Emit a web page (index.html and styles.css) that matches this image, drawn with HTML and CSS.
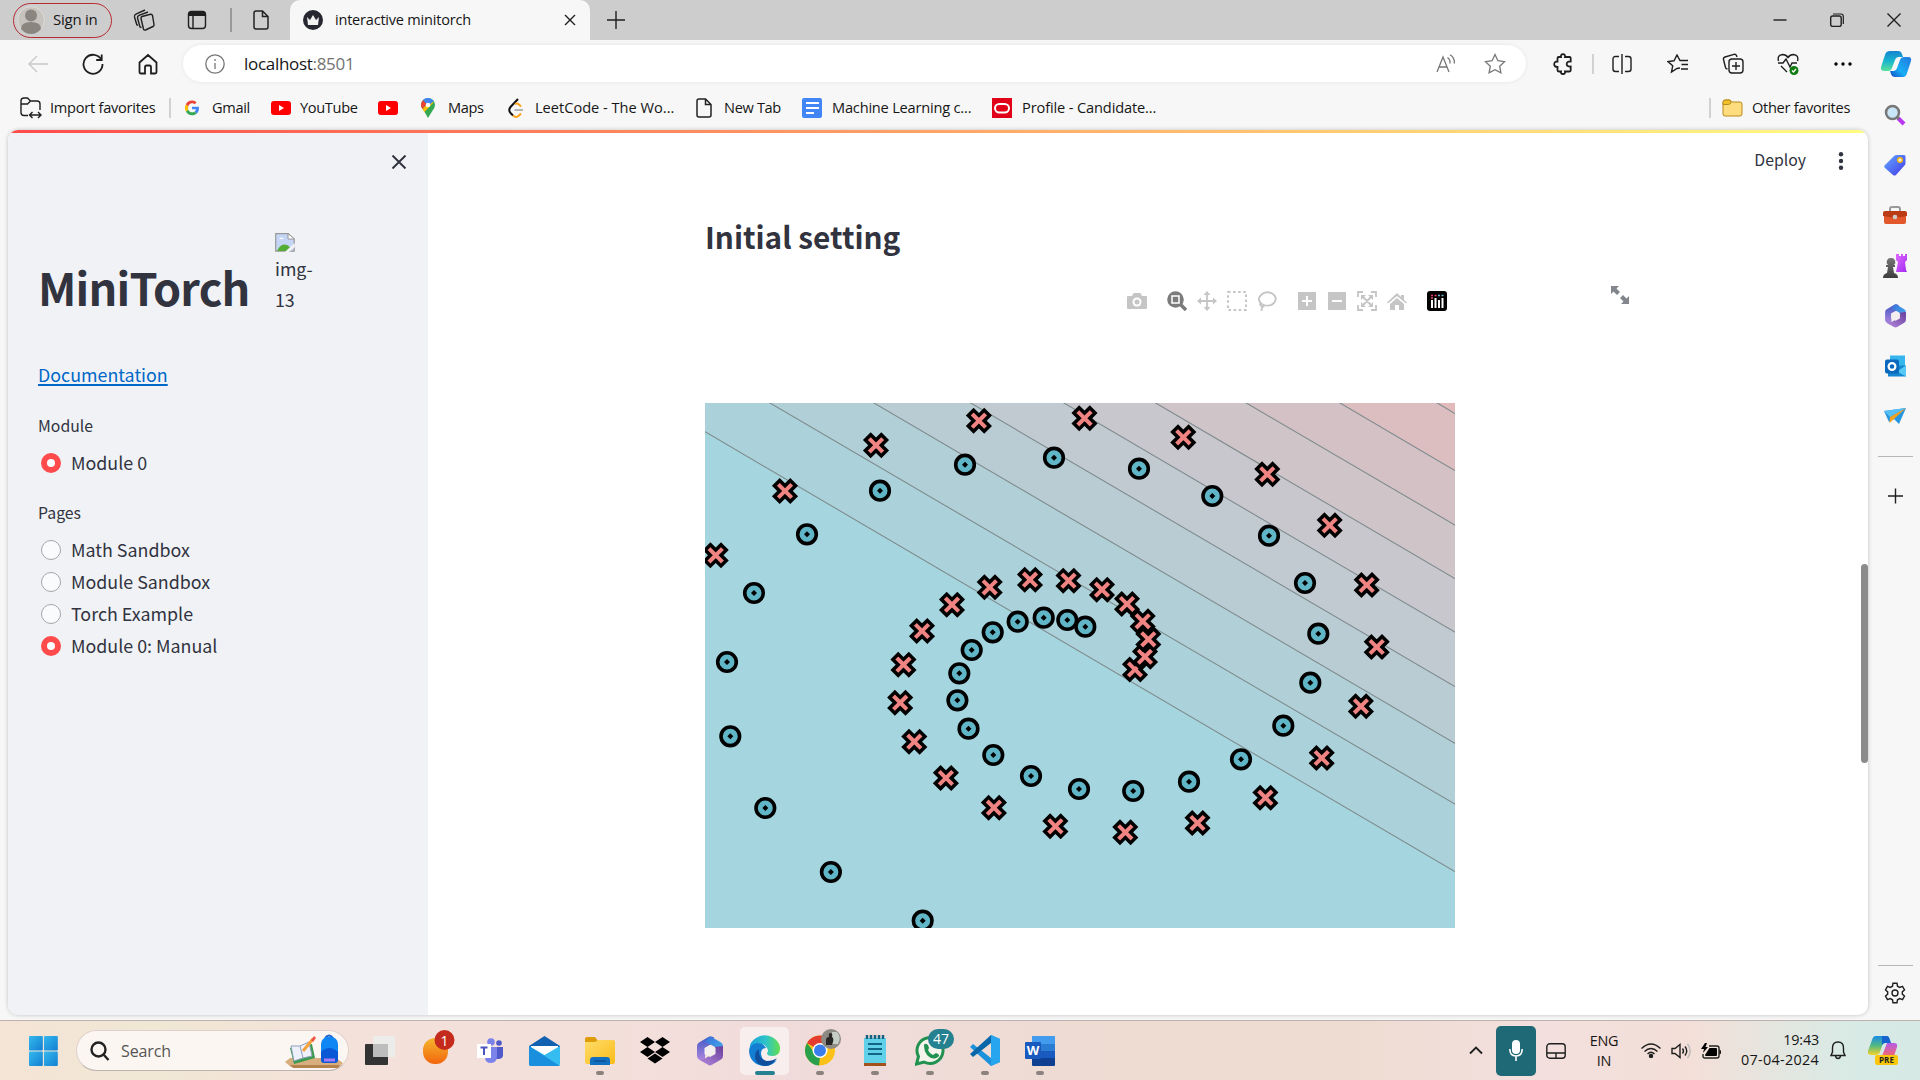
FILE: index.html
```html
<!DOCTYPE html>
<html lang="en">
<head>
<meta charset="utf-8">
<title>interactive minitorch</title>
<link rel="stylesheet" href="styles.css">
</head>
<body>
<svg width="0" height="0" class="defs">
  <defs>
    <linearGradient id="win" x1="0" y1="0" x2="1" y2="1"><stop offset="0" stop-color="#35b8ee"/><stop offset="1" stop-color="#1180d2"/></linearGradient>
    <linearGradient id="teal" x1="0" y1="0" x2="0" y2="1"><stop offset="0" stop-color="#1583cf"/><stop offset=".5" stop-color="#17b5cf"/><stop offset="1" stop-color="#5be09a"/></linearGradient>
    <linearGradient id="sky" x1="1" y1="0" x2="0" y2="1"><stop offset="0" stop-color="#2377dd"/><stop offset=".6" stop-color="#18aef5"/><stop offset="1" stop-color="#1246c4"/></linearGradient>
    <linearGradient id="tagg" x1="0" y1="0" x2="1" y2="1"><stop offset="0" stop-color="#62aaff"/><stop offset="1" stop-color="#4338e8"/></linearGradient>
    <linearGradient id="orange" x1="0" y1="0" x2="0" y2="1"><stop offset="0" stop-color="#f5b62e"/><stop offset="1" stop-color="#f2660c"/></linearGradient>
    <linearGradient id="yellow" x1="0" y1="0" x2="1" y2="1"><stop offset="0" stop-color="#ffdc6b"/><stop offset="1" stop-color="#fbbc18"/></linearGradient>
    <linearGradient id="purple" x1="0" y1="0" x2="1" y2="1"><stop offset="0" stop-color="#e06bff"/><stop offset="1" stop-color="#a22af0"/></linearGradient>
    <linearGradient id="dark" x1="0" y1="0" x2="0" y2="1"><stop offset="0" stop-color="#777"/><stop offset="1" stop-color="#3d3d3d"/></linearGradient>
    <linearGradient id="edgeTop" x1="0" y1="0" x2="1" y2="0"><stop offset="0" stop-color="#1ba0de"/><stop offset=".55" stop-color="#2fc4c6"/><stop offset="1" stop-color="#64e04e"/></linearGradient>
    <linearGradient id="rainbow" x1="0" y1="0" x2="0" y2="1"><stop offset="0" stop-color="#1a8be8"/><stop offset=".5" stop-color="#4fb884"/><stop offset="1" stop-color="#f5d32a"/></linearGradient>
    <linearGradient id="sunset" x1="0" y1="0" x2="0" y2="1"><stop offset="0" stop-color="#b45ae8"/><stop offset="1" stop-color="#f2696f"/></linearGradient>
    <linearGradient id="hexA" x1="0" y1="0" x2="1" y2="1"><stop offset="0" stop-color="#3a6fd8"/><stop offset="1" stop-color="#46b4ee"/></linearGradient>
    <linearGradient id="hexB" x1="0" y1="0" x2="0" y2="1"><stop offset="0" stop-color="#3f57c4"/><stop offset="1" stop-color="#b98be0"/></linearGradient>
    <linearGradient id="hexC" x1="0" y1="1" x2="1" y2="0"><stop offset="0" stop-color="#b58ade"/><stop offset="1" stop-color="#6a3f9c"/></linearGradient>
    <symbol id="m365" viewBox="0 0 26 30">
      <path d="M11 1.200 2 6.500Q0 7.800 0 10v10q0 2.200 2 3.400l6 3.400V12l9-5.500V1.600Q14-.5 11 1.200z" fill="url(#hexB)"/>
      <path d="M11 1.200q2-1.200 4 0l9 5.300q2 1.300 2 3.500v9l-8-4.500V11l-5-2.800L8 6z" fill="url(#hexA)"/>
      <path d="M26 10v10q0 2.200-2 3.400l-9 5.400q-2 1.200-4 0L2 23.500l6-1 10-6v-5.500z" fill="url(#hexC)"/>
      <path d="M13 9 18.500 12v6L13 21 7.500 18v-6z" fill="#f5eeee"/>
    </symbol>
    <symbol id="page" viewBox="0 0 16 20"><path d="M3 1h6.500L15 6.500V17q0 2-2 2H3q-2 0-2-2V3q0-2 2-2zM9.500 1v5.500H15" fill="none" stroke="#222" stroke-width="1.500"/></symbol>
    <symbol id="yt" viewBox="0 0 20 14"><rect width="20" height="14" rx="3" fill="#f00"/><path d="M8 4l5 3-5 3z" fill="#fff"/></symbol>
    <g id="x"><path d="M0 5.300l5.300 5.300 5.300-5.300L5.300 0l5.300-5.300-5.300-5.300L0-5.300-5.300-10.600-10.600-5.300-5.300 0-10.600 5.300-5.300 10.600z" fill="#ef8482" stroke="#000" stroke-width="3.500"/></g>
    <g id="o"><circle r="9.300" fill="#60b5c7" stroke="#000" stroke-width="3.600"/><path d="M0-3 3 0 0 3-3 0z"/></g>
  </defs>
</svg>

<header class="tabstrip">
  <div class="signin"><svg width="28" height="28" viewBox="0 0 28 28"><circle cx="14" cy="14" r="13.300" fill="#c6c2bd" stroke="#dedbd8"/><circle cx="14" cy="9.500" r="6" fill="#8a857f"/><path d="M4 23q0-7 10-7t10 7q-4 5-10 5T4 23z" fill="#8a857f"/></svg><span>Sign in</span></div>
  <div class="cell w54"><svg width="22" height="22" viewBox="0 0 22 22" class="line"><path d="M9 6.500l8.500-2.200q1.500-.3 2 1.200l1.500 9q.2 1.500-1 2l-7.500 3.500q-1.500.5-2-1L8 8.500Q7.800 7 9 6.500z" transform="translate(0 1)"/><path d="M8.500 18.500l-1.500-.5-2.500-9q-.3-2 1.500-2.700L15 3M5 16.500l-1.200-.8L1.500 8q-.4-2 1.400-2.800L12 1"/></svg></div>
  <div class="cell w52"><svg width="20" height="20" viewBox="0 0 20 20" class="line"><rect x="1.500" y="1.500" width="17" height="17" rx="3"/><path d="M2 4h16" stroke-width="4"/><path d="M6 5v13"/></svg></div>
  <i class="vline"></i>
  <div class="cell w58"><svg width="16" height="20"><use href="#page"/></svg></div>
  <div class="tab">
    <svg width="20" height="20" viewBox="0 0 20 20"><circle cx="10" cy="10" r="10" fill="#262730"/><path d="M4 7l3 3 3-5 3 5 3-3-1 8H5z" fill="#f2f2f2"/></svg>
    <span>interactive minitorch</span>
    <svg width="12" height="12" viewBox="0 0 12 12" class="line"><path d="M1 1l10 10M11 1L1 11"/></svg>
  </div>
  <div class="cell w54"><svg width="18" height="18" viewBox="0 0 18 18" class="line"><path d="M9 0v18M0 9h18"/></svg></div>
  <div class="winbtns">
    <svg width="14" height="14" viewBox="0 0 14 14" class="line"><path d="M.5 7h13"/></svg>
    <svg width="14" height="14" viewBox="0 0 14 14" class="line"><rect x=".7" y="3" width="10.500" height="10.500" rx="2"/><path d="M3 1h8q2.300 0 2.300 2.300V11" stroke-width="1.200"/></svg>
    <svg width="14" height="14" viewBox="0 0 14 14" class="line"><path d="M.5.5l13 13M13.500.5l-13 13"/></svg>
  </div>
</header>

<nav class="toolbar">
  <div class="cell w56"><svg width="22" height="20" viewBox="0 0 22 20" class="line pale"><path d="M10 2L2 10l8 8M2 10h19"/></svg></div>
  <div class="cell w54"><svg width="22" height="22" viewBox="0 0 22 22" class="line thick"><path d="M19.500 7A9.500 9.500 0 1 0 20.500 11M19.700 1.500V7h-5.500"/></svg></div>
  <div class="cell w56"><svg width="20" height="22" viewBox="0 0 20 22" class="line thick"><path d="M1.500 9.500L10 2l8.500 7.500V19q0 1.500-1.500 1.500h-4V14q0-1.500-1.500-1.500h-3Q7 12.500 7 14v6.500H3q-1.500 0-1.500-1.500z"/></svg></div>
  <div class="url">
    <svg width="20" height="20" viewBox="0 0 20 20" class="line gray"><circle cx="10" cy="10" r="9.200"/><path d="M10 9v6M10 5v2"/></svg>
    <span class="addr">localhost<b>:8501</b></span>
    <svg width="20" height="19" viewBox="0 0 20 19" class="line gray"><path d="M1 18L7 3l6 15M3 13h8M11.500 3.500q3 2 2.500 6M14 .8q5 3 4.300 8.700"/></svg>
    <svg width="22" height="22" viewBox="0 0 22 22" class="line gray star"><path d="M11 1.500l2.900 6.200 6.600.9-4.800 4.600 1.200 6.700L11 16.700l-5.900 3.200 1.200-6.700L1.500 8.600l6.600-.9z"/></svg>
  </div>
  <div class="cell ext"><svg width="20" height="22" viewBox="0 0 20 22" class="line thick"><path d="M6.500 4H8Q7.500 1.200 10 1.200T12 4h4.500q1.200 0 1.200 1.200V8.500q-4-.3-4 2.500t4 2.500v3.800q0 1.200-1.200 1.200H12q.5 2.500-2 2.500t-2-2.500H5.700q-1.200 0-1.200-1.200V14Q1.200 14 1.200 11.200T4.500 8.500V5.200Q4.500 4 5.700 4z"/></svg></div>
  <i class="vline soft"></i>
  <div class="cell w56"><svg width="20" height="20" viewBox="0 0 20 20" class="line"><path d="M7 2.500H3.500q-2.500 0-2.500 2.500v10q0 2.500 2.500 2.500H7M13 2.500h3.500Q19 2.500 19 5v10q0 2.500-2.500 2.500H13M10 0v20"/></svg></div>
  <div class="cell w56"><svg width="22" height="20" viewBox="0 0 22 20" class="line"><path d="M13 14l-3 .5-5.500 3.500 1.200-6.200L1 7.600l6-.8L10 1l3 5.500h8M14.500 10.500H21M14 15h7"/></svg></div>
  <div class="cell w54"><svg width="22" height="21" viewBox="0 0 22 21" class="line"><rect x="7" y="6" width="14" height="14" rx="3"/><path d="M14 9v8M10 13h8M15 4l-.5-1.500q-.8-1.700-2.500-1.200L3 4Q1 4.700 1.500 6.500l2 8q.5 1.500 2 1.500"/></svg></div>
  <div class="cell w56"><svg width="22" height="22" viewBox="0 0 22 22" class="line"><path d="M1.500 8Q0 2 5.500 1.500 9 1.500 11 4.500q2-3 5.500-3Q22 2 20.500 8M1 10h5l3-4 4 8 2-4h5M4 13l6 6"/><circle cx="17" cy="17.500" r="4.500" class="green"/><path d="M15 17.500l1.500 1.500 2.500-3" stroke="#fff"/></svg></div>
  <div class="cell w54"><svg width="18" height="4" viewBox="0 0 18 4"><circle cx="2" cy="2" r="1.700"/><circle cx="9" cy="2" r="1.700"/><circle cx="16" cy="2" r="1.700"/></svg></div>
  <div class="cell copilot"><svg width="31" height="28" viewBox="0 0 31 28"><path d="M9 1h8q3 0 4 3l1 3h-4q-3 0-4 3l-3 8q-1 3-4 3H3q-4 0-3-4L4 5q1-4 5-4z" fill="url(#teal)"/><path d="M22 27h-8q-3 0-4-3l-1-3h3q3 0 4-3l3-8q1-3 4-3h4q4 0 3 4l-4 12q-1 4-4 4z" fill="url(#sky)"/></svg></div>
</nav>

<nav class="bookmarks">
  <a class="bm import"><svg width="22" height="22" viewBox="0 0 22 22" class="line"><path d="M8 18.500H4q-3 0-3-3V4q0-3 3-3h3.500l3 3H17q3 0 3 3v6M1 7h6.500l3-3M10 18h10M12.500 15l-3 3 3 3M18 15l3 3-3 3"/></svg><span>Import favorites</span></a>
  <i class="vline soft"></i>
  <a class="bm gmail"><svg width="16" height="16" viewBox="0 0 48 48"><path d="M45 24c0-1.600-.1-2.700-.4-4H24v8h12c-.5 3-2 5-4.500 7l7 5.500C42.500 37 45 31 45 24z" fill="#4285f4"/><path d="M24 46c6 0 11-2 14.500-5.500l-7-5.500c-5 3.500-15 2.500-18.500-6l-7.500 5.500C9.500 41.500 16 46 24 46z" fill="#34a853"/><path d="M13 29c-1-3-1-7 0-10l-7.500-6c-3.500 7-3.500 15 0 21.500z" fill="#fbbc05"/><path d="M24 10c3.500 0 6 1.500 7.500 3l6.500-6C26 -3 11 2 5.500 13l7.500 6c2-6 6-9 11-9z" fill="#ea4335"/></svg><span>Gmail</span></a>
  <a class="bm youtube"><svg width="20" height="14"><use href="#yt"/></svg><span>YouTube</span></a>
  <a class="bm ytonly"><svg width="20" height="14"><use href="#yt"/></svg></a>
  <a class="bm maps"><svg width="14" height="20" viewBox="0 0 14 20"><path d="M0 7a7 7 0 0 1 14 0q0 3-3 6.500L7 20 3 13Q0 9.500 0 7z" fill="#34a853"/><path d="M0 7q0-3 2-5l4 4-4.500 5Q0 9 0 7z" fill="#ea4335"/><path d="M1.500 11L9 3l3.500 1.500L3.500 14z" fill="#fbbc04"/><path d="M2 2a7 7 0 0 1 10.600.8L7.500 8z" fill="#4285f4"/><circle cx="7" cy="7" r="2.300" fill="#fff"/></svg><span>Maps</span></a>
  <a class="bm leet"><svg width="16" height="20" viewBox="0 0 16 20" fill="none" stroke-width="2"><path d="M10 1L2.500 9Q0 12 2.500 15L5 17.500" stroke="#111"/><path d="M5 17.500q3 3 6 0l2-2M7 6q2-1 4 .5l2 2" stroke="#ffa116"/><path d="M6.500 12H15" stroke="#b3b3b3"/></svg><span>LeetCode - The Wo...</span></a>
  <a class="bm newtab"><svg width="16" height="20"><use href="#page"/></svg><span>New Tab</span></a>
  <a class="bm ml"><svg width="20" height="20" viewBox="0 0 20 20"><rect width="20" height="20" rx="2" fill="#4285f4"/><path d="M4 5h13M4 10h13M4 15h8" stroke="#fff" stroke-width="2"/></svg><span>Machine Learning c...</span></a>
  <a class="bm prof"><svg width="20" height="20" viewBox="0 0 20 20"><rect width="20" height="20" fill="#e1001a"/><rect x="3" y="6" width="14" height="8.500" rx="4.250" fill="none" stroke="#fff" stroke-width="2"/></svg><span>Profile - Candidate...</span></a>
  <i class="vline soft last"></i>
  <a class="bm other"><svg width="21" height="18" viewBox="0 0 21 18"><path d="M1 5q0-4 2-4h4.500q1.500 0 2 2H18q2 0 2 2v10q0 2-2 2H3q-2 0-2-2z" fill="#ffdd7e" stroke="#b98a18"/><path d="M1 5.500V3q0-2 2-2h4q2 0 2 2-.5 2.500-2.500 2.500z" fill="#f0bf2c" stroke="#b98a18"/></svg><span>Other favorites</span></a>
</nav>

<div class="middle">
  <div class="app">
    <div class="decoration"></div>
    <aside class="sidebar">
      <div class="closebar"><svg width="16" height="14" viewBox="0 0 16 14"><path d="M1.500.5l13 13M14.500.5l-13 13" stroke="#31333f" stroke-width="2"/></svg></div>
      <div class="brand">
        <h1>MiniTorch</h1>
        <div class="broken">
          <svg width="20" height="19" viewBox="0 0 20 19"><path d="M.7.7h12.500l6 5.500v12H.7z" fill="#c5d5f5" stroke="#999" stroke-width="1.200"/><path d="M2 18q3-7 8-6.500 3 0 5 3L11 18z" fill="#55ad35"/><path d="M4 6q2-3 5 0z" fill="#fff"/><path d="M13 .7V6h6.500z" fill="#fff" stroke="#999"/><path d="M19.500 10L10 19h4l6-5z" fill="#f0f2f6"/></svg>
          <p>img-<br>13</p>
        </div>
      </div>
      <a class="doc">Documentation</a>
      <div class="label">Module</div>
      <div class="radio on"><i></i>Module 0</div>
      <div class="label second">Pages</div>
      <div class="radio"><i></i>Math Sandbox</div>
      <div class="radio"><i></i>Module Sandbox</div>
      <div class="radio"><i></i>Torch Example</div>
      <div class="radio on"><i></i>Module 0: Manual</div>
    </aside>
    <main>
      <div class="actions"><span>Deploy</span><svg width="6" height="18" viewBox="0 0 6 18" fill="#31333f"><circle cx="3" cy="2.300" r="2.200"/><circle cx="3" cy="9" r="2.200"/><circle cx="3" cy="15.700" r="2.200"/></svg></div>
      <h2>Initial setting</h2>
      <div class="modebar">
        <svg class="g1" viewBox="0 0 20 20"><path d="M1 5h4l1.500-3h7L15 5h4q1 0 1 1v11q0 1-1 1H1q-1 0-1-1V6q0-1 1-1z"/><circle cx="10" cy="11" r="4.500" fill="#fff"/><circle cx="10" cy="11" r="2.500"/></svg>
        <svg class="hot" viewBox="0 0 20 20"><circle cx="8.500" cy="8.500" r="8.300"/><path d="M13 13l6 6" stroke="#7c7c7c" stroke-width="3.500"/><path d="M5 5h7v7H5z" fill="none" stroke="#fff" stroke-width="1.500"/></svg>
        <svg viewBox="0 0 20 20"><path d="M10 0l3.500 4h-2.600v5.100H16V6.500l4 3.500-4 3.500v-2.600h-5.100V16h2.600L10 20l-3.500-4h2.600v-5.100H4v2.600L0 10l4-3.500v2.600h5.100V4H6.500z"/></svg>
        <svg viewBox="0 0 20 20"><rect x="1" y="1" width="18" height="18" fill="none" stroke="#c5c5c5" stroke-width="2" stroke-dasharray="2.500 2.600"/></svg>
        <svg class="g2" viewBox="0 0 20 20"><path d="M6 14Q-1 9 4 4t12-1q5 4 1 9-4 4-10 2-4-2-4-1t2 3q2 0 2-2M5 16l-.5 4" fill="none" stroke="#c5c5c5" stroke-width="1.800"/></svg>
        <svg viewBox="0 0 20 20"><path d="M1 1h18v18H1z"/><path d="M10 5v10M5 10h10" stroke="#fff" stroke-width="2"/></svg>
        <svg viewBox="0 0 20 20"><path d="M1 1h18v18H1z"/><path d="M5 10h10" stroke="#fff" stroke-width="2"/></svg>
        <svg viewBox="0 0 20 20"><path d="M1 6V1h5M14 1h5v5M19 14v5h-5M6 19H1v-5M5 5l10 10M15 5L5 15" fill="none" stroke="#c5c5c5" stroke-width="1.800"/><path d="M4 4h5L4 9zM16 4v5l-5-5zM16 16h-5l5-5zM4 16v-5l5 5z"/></svg>
        <svg class="g3" viewBox="0 0 20 20"><path d="M10 2l4 4V4h3v5l3 2.500-1 1L10 5l-9 7.500-1-1zM10 7l7 6v6h-5v-5H8v5H3v-6z"/></svg>
        <svg viewBox="0 0 20 20"><rect width="20" height="20" rx="3" fill="#000"/><path d="M5 9v8M8.500 7v10M12 9v8M15.500 7v10" stroke="#fff" stroke-width="2"/><path d="M4 4.500h2M4 7h2M7.500 4.500h2" stroke="#f0396b" stroke-width="1.500"/><path d="M11 4.500h2M14.500 4.500h2" stroke="#6fb5d9" stroke-width="1.500"/></svg>
        <svg class="full" viewBox="0 0 18 18"><path d="M0 0h8L5.500 2.500 9 6 6 9 2.500 5.500 0 8zM18 18h-8l2.500-2.500L9 12l3-3 3.500 3.500L18 10z" fill="#84868e"/></svg>
      </div>
      <svg class="plot" width="750" height="525" viewBox="0 0 750 525">
        <rect width="750" height="525" fill="#a5d5df"/>
        <g stroke="#7f8c8e" stroke-width="1.100">
          <path d="M-2 27.500L752 469.900V-2H-2z" fill="#abd2db"/>
          <path d="M61.600-2L752 402.200V-2z" fill="#b1cfd6"/>
          <path d="M165.600-2L752 341.500V-2z" fill="#b9ccd3"/>
          <path d="M262.300-2L752 284.800V-2z" fill="#c1c9d1"/>
          <path d="M355.600-2L752 230.400V-2z" fill="#c8c7cd"/>
          <path d="M447.300-2L752 176.800V-2z" fill="#cfc4c8"/>
          <path d="M537.900-2L752 123.200V-2z" fill="#d4c1c5"/>
          <path d="M631.600-2L752 68.800V-2z" fill="#dcbdc0"/>
          <path d="M729-2L752 11.800V-2z" fill="#e3babc"/>
        </g>
        <g>
          <use href="#o" x="380.300" y="223.700"/><use href="#o" x="362.300" y="217"/><use href="#o" x="338.700" y="214.700"/><use href="#o" x="312.700" y="218.700"/><use href="#o" x="287.700" y="229.300"/><use href="#o" x="266.700" y="247"/><use href="#o" x="254.300" y="270.300"/><use href="#o" x="252.400" y="297.300"/><use href="#o" x="263.500" y="325.700"/><use href="#o" x="288.300" y="352"/><use href="#o" x="326" y="373"/><use href="#o" x="374" y="386"/><use href="#o" x="428.200" y="388"/><use href="#o" x="484" y="378.700"/><use href="#o" x="536" y="356.300"/><use href="#o" x="578.300" y="322.700"/><use href="#o" x="605.300" y="279.700"/><use href="#o" x="613.300" y="230.700"/><use href="#o" x="600" y="180"/><use href="#o" x="564" y="132.700"/><use href="#o" x="507.300" y="93"/><use href="#o" x="434" y="65.700"/><use href="#o" x="349" y="54.700"/><use href="#o" x="260" y="61.700"/><use href="#o" x="175" y="87.700"/><use href="#o" x="102" y="131.300"/><use href="#o" x="49" y="190"/><use href="#o" x="22" y="259"/><use href="#o" x="25.300" y="333.300"/><use href="#o" x="60.300" y="405"/><use href="#o" x="125.900" y="469"/><use href="#o" x="217.700" y="517.700"/>
        </g>
        <g>
          <use href="#x" x="430" y="266.500"/><use href="#x" x="440" y="253.700"/><use href="#x" x="443.300" y="236.300"/><use href="#x" x="437.700" y="218.300"/><use href="#x" x="422" y="201"/><use href="#x" x="397" y="186.700"/><use href="#x" x="363.500" y="177.700"/><use href="#x" x="325" y="176.700"/><use href="#x" x="284.700" y="184.300"/><use href="#x" x="247" y="201.700"/><use href="#x" x="217" y="228"/><use href="#x" x="198.500" y="261.700"/><use href="#x" x="195.200" y="299.700"/><use href="#x" x="209.300" y="338.700"/><use href="#x" x="240.900" y="375"/><use href="#x" x="288.900" y="404.700"/><use href="#x" x="350.400" y="423.300"/><use href="#x" x="420.300" y="429.300"/><use href="#x" x="492.500" y="420"/><use href="#x" x="560.400" y="394.700"/><use href="#x" x="616.700" y="355"/><use href="#x" x="655.900" y="303.300"/><use href="#x" x="671.700" y="244"/><use href="#x" x="661.700" y="182"/><use href="#x" x="624.700" y="122.300"/><use href="#x" x="562.300" y="71.300"/><use href="#x" x="478.300" y="34.300"/><use href="#x" x="379.500" y="15.300"/><use href="#x" x="273.900" y="17.700"/><use href="#x" x="171" y="42.300"/><use href="#x" x="80" y="88"/><use href="#x" x="10.700" y="152.300"/>
        </g>
      </svg>
    </main>
    <div class="thumb"></div>
  </div>
  <aside class="rail">
    <svg width="22" viewBox="0 0 22 22"><path d="M14 14l6 6" stroke="#b936f2" stroke-width="4"/><path d="M12 12l3 3" stroke="#777" stroke-width="2.500"/><circle cx="8.500" cy="8.500" r="6.500" fill="#c9e5f8" stroke="#777" stroke-width="2.500"/></svg>
    <svg width="22" viewBox="0 0 22 22"><path d="M10 2q1-1 3-1h7q1.500 0 1.500 1.500V9q0 2-1.500 3L12 21q-1.500 1-3 0L1 14q-1.500-1.500 0-3z" fill="url(#tagg)"/><circle cx="16" cy="6" r="2.300" fill="#eee" stroke="#f3b712" stroke-width="1.500"/></svg>
    <svg width="24" viewBox="0 0 24 18"><path d="M7 5V3q0-2 2-2h6q2 0 2 2v2" fill="none" stroke="#999" stroke-width="2"/><rect x="1" y="8" width="22" height="10" rx="2" fill="#e2582c"/><path d="M2 5h20q2 0 2 2v3L12 12 0 10V7q0-2 2-2z" fill="#bb3c14"/><circle cx="12" cy="11" r="2.300" fill="#ccc"/></svg>
    <svg width="24" viewBox="0 0 24 24"><path d="M13 0h3v2h2V0h2v2h2V0h2v6l-2 2 1 8 1 2H13l2-10-2-2z" fill="url(#purple)"/><path d="M8 4a4 4 0 0 1 3 7h1v2h-2l1 6q4 1 4 5H0q0-4 4-5l1-6H3v-2h2a4 4 0 0 1 3-7z" fill="url(#dark)"/></svg>
    <svg width="21"><use href="#m365"/></svg>
    <svg width="21" viewBox="0 0 21 21"><rect x="5" width="15" height="12" fill="#34b5ee"/><path d="M3 10h18v11H3z" fill="#1686d0"/><path d="M21 10l-9 6 9 5z" fill="#56c9f5"/><rect y="4" width="14" height="14" rx="2" fill="#0b68bd"/><circle cx="7" cy="11" r="3.400" fill="none" stroke="#fff" stroke-width="2.200"/></svg>
    <svg width="22" viewBox="0 0 22 16"><path d="M0 3L22 0 15 16 10 11 5 14z" fill="#2695e2"/><path d="M0 3L22 0 6 9z" fill="#57bff8"/><path d="M6 9L22 0 10 11 5.500 15z" fill="#f0a221"/></svg>
    <hr>
    <svg width="15" viewBox="0 0 15 15" class="line"><path d="M7.500 0v15M0 7.500h15"/></svg>
    <div class="grow"></div>
    <hr class="lower">
    <svg class="gear line" width="22" viewBox="0 0 22 22"><path d="M9 1.200h4l.5 3 2.200 1.200 2.800-1 2 3.500-2.200 2v2.200l2.200 2-2 3.500-2.800-1-2.200 1.200-.5 3H9l-.5-3-2.200-1.200-2.800 1-2-3.500 2.200-2V9.900l-2.200-2 2-3.500 2.800 1 2.200-1.200z"/><circle cx="11" cy="11" r="3"/></svg>
  </aside>
</div>

<footer class="taskbar">
  <svg class="start" width="29" height="30" viewBox="0 0 30 31" fill="url(#win)"><rect width="14.300" height="15" rx="1"/><rect x="15.500" width="14.300" height="15" rx="1"/><rect y="16" width="14.300" height="15" rx="1"/><rect x="15.500" y="16" width="14.300" height="15" rx="1"/></svg>
  <div class="search">
    <svg width="20" height="20" viewBox="0 0 20 20" fill="none" stroke="#222" stroke-width="2.400"><circle cx="8.500" cy="8.500" r="7"/><path d="M13.500 13.500L18.500 19"/></svg>
    <span>Search</span>
    <svg width="58" height="34" viewBox="0 0 58 34"><path d="M5 24h46l7 5-4 4H6l-6-5z" fill="#d9ae7e"/><path d="M5 31h50l-2 3H8z" fill="#b5824e"/><path d="M5 14l22-4 3 14-21 6z" fill="#3c9a4f"/><path d="M6 12l9 0 9-4 3 14-9 2-9 3z" fill="#eef1fb" stroke="#8da0b8"/><path d="M15 12l3 12" stroke="#8da0b8"/><path d="M18 17L28 5" stroke="#f5a13c" stroke-width="3"/><path d="M26 6l3-4 2 2-3 4z" fill="#ee5544"/><path d="M40 4q4-5 8 0" fill="none" stroke="#1d62cd" stroke-width="2"/><rect x="36" y="3" width="17" height="26" rx="7" fill="#0e87f4"/><path d="M36 18q8-8 17 0v8q0 3-3 3H39q-3 0-3-3z" fill="#0a58d6"/><path d="M39 26h11" stroke="#a97cf5" stroke-width="3"/></svg>
  </div>
  <div class="apps">
    <div class="item"><svg width="30" height="30" viewBox="0 0 30 30"><rect x="0" y="8" width="23" height="21" rx="1" fill="#333"/><rect x="8" y="0" width="22" height="21" rx="1" fill="#ececea"/><path d="M8 8h15v13H8z" fill="#bdbdbd"/></svg></div>
    <div class="item notify"><svg width="32" height="34" viewBox="0 0 32 34"><rect x="0" y="8" width="25" height="26" rx="12" fill="url(#orange)"/><circle cx="21.500" cy="10" r="10" fill="#c42b1c"/><text x="21.500" y="15.500" class="badge">1</text></svg></div>
    <div class="item"><svg width="26" height="25" viewBox="0 0 26 25"><circle cx="14" cy="4" r="3.800" fill="#7b83eb"/><circle cx="22" cy="5" r="2.800" fill="#5059c9"/><path d="M19 9h7v8q0 4-5 4h-2z" fill="#5059c9"/><path d="M8 9h12v9q0 7-6 7t-6-6z" fill="#7b83eb"/><rect y="6" width="14" height="14" fill="#fff"/><path d="M3.500 9.500h7M7 9v8" stroke="#4b53bc" stroke-width="2"/></svg></div>
    <div class="item"><svg width="31" height="30" viewBox="0 0 31 30"><path d="M0 10L15.500 0 31 10v4H0z" fill="#1261b0"/><path d="M2 10h27v12H2z" fill="#fff"/><path d="M0 10l15.500 9L31 10v18q0 2-2 2H2q-2 0-2-2z" fill="#35bdf2"/><path d="M0 10l31 20H2q-2 0-2-2z" fill="#1a8fdd"/></svg></div>
    <div class="item open"><svg width="30" height="28" viewBox="0 0 30 28"><path d="M0 2q0-2 2-2h8l3 4h17v6H0z" fill="#dd9c09"/><path d="M0 5h10l3-2h15q2 0 2 2v20q0 2-2 2H2q-2 0-2-2z" fill="url(#yellow)"/><path d="M5 28v-5q0-3 3-3h14q3 0 3 3v5z" fill="#1370c0"/><path d="M9 24h12" stroke="#09417e"/></svg></div>
    <div class="item"><svg width="30" height="27" viewBox="0 0 30 27"><path d="M7.500 0L15 5 7.500 10 0 5zM22.500 0L30 5l-7.500 5L15 5zM7.500 10L15 15l-7.500 5L0 15zM22.500 10L30 15l-7.500 5L15 15zM15 16.500l7.500 5L15 26.500 7.500 21.500z"/></svg></div>
    <div class="item"><svg width="26" height="30"><use href="#m365"/></svg></div>
    <div class="item open active"><svg width="31" height="31" viewBox="0 0 31 31"><path d="M1 17Q-1 8 7 3 15-2 23 2q9 5 8 13-1 6-8 6-5 0-5-3 2-2 0-5-3-5-9-4-6 1-8 8z" fill="url(#edgeTop)"/><path d="M0 16q1-7 8-8 7 0 9 5-5 0-5 6 1 8 10 8 3 0 6-2-5 6-12 6Q1 30 0 16z" fill="#147fd2"/><path d="M10 14q-1 10 8 12 6 0 10-3-5 8-12 8-10-1-10-9 0-6 4-8z" fill="#0f4f9e"/></svg></div>
    <div class="item open profile"><svg width="36" height="37" viewBox="0 0 36 37"><circle cx="15" cy="21.500" r="15" fill="#fbc116"/><path d="M15 21.500L2 14A15 15 0 0 1 28 14H15z" fill="#e33b2e"/><path d="M2 14l8 10.500 5 3L14 36.500A15 15 0 0 1 2 14z" fill="#29a14c"/><circle cx="15" cy="21.500" r="7.500" fill="#fff"/><circle cx="15" cy="21.500" r="6" fill="#3b7ded"/><circle cx="26" cy="10" r="10" fill="#8d8a84"/><path d="M27 3h5q3 3 2.500 8L33 15h-6z" fill="#c5cdc5"/><path d="M21 16v-5q0-3 3-3-1-4 1.500-4T27 8q2 1 1 5l-1 3z" fill="#292827"/></svg></div>
    <div class="item open"><svg width="22" height="31" viewBox="0 0 22 31"><path d="M0 27h22v4H0z" fill="#a3521b"/><path d="M0 3h22v25H0z" fill="#61d0e9"/><path d="M4 9h14M4 14h14M4 19h14" stroke="#106684" stroke-width="1.800"/><path d="M3 0v4M7 0v4M11 0v4M15 0v4M19 0v4" stroke="#14627e" stroke-width="2.500"/></svg></div>
    <div class="item open chat"><svg width="40" height="37" viewBox="0 0 40 37"><path d="M1.500 35l2-7.500A13 13 0 1 1 9 33z" fill="#f4f4ec" stroke="#219150" stroke-width="3"/><path d="M9 17q0-4 4-1l1 3-1 2q1 3 5 5l3-2q5 2 2 4-5 4-11-2-3-4-3-9z" fill="#219150"/><rect x="13" width="26" height="20" rx="10" fill="#25808f"/><text x="26" y="15.300" class="badge">47</text></svg></div>
    <div class="item open"><svg width="30" height="31" viewBox="0 0 30 31"><path d="M21 0l9 4v23l-9 4L0 12l3-3 18 14z" fill="#1c91dc"/><path d="M21 0v8L3 22l-3-3z" fill="#0967a9"/><path d="M21 0l9 4v23l-9 4z" fill="#28a5ef"/></svg></div>
    <div class="item open"><svg width="30" height="30" viewBox="0 0 30 30"><path d="M7 0h23v8H7z" fill="#429bec"/><path d="M7 8h23v7H7z" fill="#2b7cd3"/><path d="M7 15h23v7H7z" fill="#185abd"/><path d="M7 22h23v7q0 1-1 1H8q-1 0-1-1z" fill="#103f91"/><rect y="6" width="16" height="17" rx="1" fill="#185abd"/><text x="8" y="19" class="w">W</text></svg></div>
  </div>
  <div class="tray">
    <div class="cell"><svg width="14" height="9" viewBox="0 0 14 9" class="line thick"><path d="M1 7.500l6-6 6 6"/></svg></div>
    <div class="cell mic"><svg width="14" height="21" viewBox="0 0 14 21"><rect x="3" width="8" height="14" rx="4" fill="#fff"/><path d="M.8 9q0 7 6.200 7t6.200-7M7 16v5" fill="none" stroke="#fff" stroke-width="1.600"/></svg></div>
    <div class="cell"><svg width="20" height="16" viewBox="0 0 20 16" class="line"><rect x=".8" y=".8" width="18.400" height="14.400" rx="3"/><path d="M1 10h18M10 10v5"/></svg></div>
    <div class="cell lang">ENG<br>IN</div>
    <div class="cell"><svg width="20" height="15" viewBox="0 0 20 15" class="line"><path d="M.5 5.500Q10-3.500 19.500 5.500M3.500 8.500q6.500-6 13 0M6.500 11q3.500-3.500 7 0"/><circle cx="10" cy="13" r="1.500" fill="#222"/></svg></div>
    <div class="cell"><svg width="20" height="16" viewBox="0 0 20 16" class="line"><path d="M1 5.500h3L9 1.500v13L4 10.500H1zM11.500 5.500q2 2.500 0 5M14 3.500q3.500 4.500 0 9"/><path d="M16.500 1q5.500 7 0 14" stroke="#bbb"/></svg></div>
    <div class="cell"><svg width="20" height="16" viewBox="0 0 20 16"><path d="M8 3h8q2 0 2 2v8q0 2-2 2H4q-2 0-2-2v-2" fill="none" stroke="#222" stroke-width="1.400"/><path d="M8.500 5H15q1 0 1 1v6q0 1-1 1H5q-1 0-1-1z"/><path d="M18.500 6.500q1.500 0 1.500 2.500t-1.500 2.500zM4 0L0 6h3l-1 4 5-6H4.500L6 0z"/></svg></div>
    <div class="clock">19:43<br><span>07-04-2024</span></div>
    <div class="cell"><svg width="16" height="19" viewBox="0 0 16 19" class="line"><path d="M8 1Q2.500 1 2.500 7v4L1 14.500h14L13.500 11V7q0-6-5.500-6zM5.500 15q.5 2.500 2.500 2.500t2.500-2.500"/></svg></div>
    <div class="cell"><svg width="30" height="30" viewBox="0 0 30 30"><path d="M8 0h9q3 0 4 3l1 4h-5q-2 0-3 3l-2 6q-1 3-4 3H3q-4 0-3-4L4 4q1-4 4-4z" fill="url(#rainbow)"/><path d="M14 0h5q2 0 3 4l1 3h-6q-2 0-3 2z" fill="#1864cf"/><path d="M19 7h7q4 0 3 4l-3 9H14z" fill="url(#sunset)"/><rect x="7" y="19" width="23" height="10" rx="2" fill="#f9c70c"/><text x="18.500" y="27" class="pre">PRE</text></svg></div>
  </div>
</footer>
</body>
</html>
```
FILE: styles.css
```css
* { box-sizing: border-box; }
html, body { margin: 0; width: 1920px; height: 1080px; overflow: hidden; }
body {
  display: flex;
  flex-direction: column;
  background: #f7f7f7;
  color: #161616;
  font: 14.6px/20px "Open Sans", "Noto Sans", sans-serif;
}
svg { display: block; flex: none; }
.defs { position: absolute; }
.line { fill: none; stroke: #1f1f1f; stroke-width: 1.4; }
.thick { stroke-width: 1.8; }
.gray { stroke: #767676; stroke-width: 1.3; }
.pale { stroke: #c9c9c9; }
.green { fill: #107c10; stroke: none; }
.cell { display: flex; align-items: center; justify-content: center; flex: none; }
.w52 { width: 52px; }
.w54 { width: 54px; }
.w56 { width: 56px; }
.w58 { width: 58px; }
.copilot { width: 50px; padding-left: 2px; }
.vline { width: 2px; height: 24px; background: #999; flex: none; }
.soft { background: #d2d2d2; height: 20px; }

.tabstrip { height: 40px; background: #cdcdcd; display: flex; align-items: center; flex: none; padding-left: 13px; }
.signin {
  width: 99px; height: 35px; border: 1.6px solid #b72a31; border-radius: 18px;
  display: flex; align-items: center; gap: 8px; padding: 0 0 1px 3px; margin-right: 5px;
  font-size: 15px; letter-spacing: -.25px; white-space: nowrap;
}
.signin span { margin-top: -1px; }
.tabstrip .vline { margin: 0 0 0 7px; }
.tab {
  width: 300px; height: 40px; background: #f7f7f7; border-radius: 10px 10px 0 0;
  display: flex; align-items: center; padding: 0 14px 0 13px; gap: 12px; font-size: 14.5px; letter-spacing: -.2px;
}
.tab span { flex: 1; }
.tab + .cell { width: 52px; }
.winbtns { margin-left: auto; display: flex; gap: 43px; padding-right: 19px; }

.toolbar { height: 47px; flex: none; display: flex; align-items: center; padding-left: 10px; }
.url {
  flex: none; width: 1343px; height: 37px; margin-left: 7px; border-radius: 19px; background: #fff;
  box-shadow: 0 0 4px rgba(0, 0, 0, .08);
  display: flex; align-items: center; padding: 0 20px 0 22px;
}
.addr { flex: 1; padding-left: 19px; font-size: 17px; letter-spacing: -.3px; }
.addr b { font-weight: 400; color: #737373; }
.star { margin-left: 28px; }
.ext { width: 66px; padding-left: 7px; }

.bookmarks { height: 43px; flex: none; display: flex; align-items: center; padding: 0 69px 2px 20px; }
.bm { display: flex; align-items: center; flex: none; white-space: nowrap; letter-spacing: -.35px; }
.bm span { margin-top: -2px; }
.import { width: 149px; gap: 8px; letter-spacing: -.25px; }
.gmail { width: 100px; gap: 12px; padding-left: 13px; }
.youtube { width: 107px; gap: 9px; }
.ytonly { width: 43px; }
.maps { width: 87px; gap: 13px; }
.leet { width: 188px; gap: 11px; letter-spacing: 0; }
.newtab { width: 106px; gap: 12px; }
.ml { width: 190px; gap: 10px; letter-spacing: -.2px; }
.prof { gap: 10px; letter-spacing: -.13px; }
.last { margin: 0 11px 0 auto; }
.other { gap: 9px; width: 129px; letter-spacing: -.3px; }

.middle { height: 890px; flex: none; display: flex; }
.app {
  position: relative; width: 1860px; height: 885px; margin-left: 8px; flex: none;
  display: flex; border-radius: 10px; overflow: hidden; background: #fff;
  box-shadow: 0 0 4px rgba(0, 0, 0, .22);
  font-family: "Noto Sans CJK SC", sans-serif; color: #31333f;
}
.decoration { position: absolute; top: 0; left: 0; right: 0; height: 3px; background: linear-gradient(90deg, #ff4b4b, #fffd80); }
.thumb { position: absolute; right: 0; top: 434px; width: 7px; height: 199px; border-radius: 4px; background: #8b8b8b; }
.sidebar { width: 420px; background: #f0f2f6; flex: none; padding: 0 30px; font-size: 17.85px; }
.closebar { height: 63px; display: flex; justify-content: flex-end; align-items: center; margin-right: -9px; }
.brand { display: flex; height: 155px; padding-top: 40px; }
h1 { margin: 23px 0 0; width: 237px; font-size: 45px; line-height: 62px; font-weight: 600; letter-spacing: -.8px; }
.broken p { margin: 1px 0 0; font-size: 17.8px; line-height: 31px; }
.doc { display: block; width: max-content; margin-top: 11px; line-height: 30px; color: #0068c9; text-decoration: underline; text-underline-offset: 2px; text-decoration-thickness: 1.5px; }
.label { margin-top: 23px; height: 28px; line-height: 28px; font-size: 15.8px; }
.label + .radio { margin-top: 6px; }
.label.second { margin-top: 21px; }
.radio { height: 32px; line-height: 32px; display: flex; align-items: center; gap: 10px; padding-left: 3px; }
.radio i { width: 20px; height: 20px; margin-top: 2px; border-radius: 50%; background: #fafbfc; border: 1px solid #a3a5aa; }
.radio.on i { border: 6.500px solid #ff4b4b; background: #fff; }

main { flex: 1; padding-left: 277px; }
.actions { height: 59px; display: flex; align-items: center; justify-content: flex-end; padding-right: 24px; gap: 32px; font-size: 15.8px; }
.actions svg { margin-top: 2px; }
h2 { margin: 25px 0 0; height: 45px; font-size: 29.8px; line-height: 45px; font-weight: 600; }
.modebar { display: flex; gap: 10px; padding-left: 422px; margin-top: 32px; height: 20px; fill: #c5c5c5; }
.modebar svg { width: 20px; height: 20px; }
.modebar .g1, .modebar .g2, .modebar .g3 { margin-right: 10px; }
.modebar .hot { fill: #7c7c7c; }
.modebar .full { width: 18px; height: 18px; margin: -5px 0 0 154px; }
.plot { margin-top: 92px; }

.rail { width: 52px; height: 917px; margin-top: -27px; display: flex; flex-direction: column; align-items: center; padding-left: 2px; }
.rail > svg { flex: none; height: 24px; margin-bottom: 26.2px; }
.rail hr { width: 35px; margin: 2px 0 27px; border: 0; border-top: 1px solid #b6b6b6; flex: none; }
.rail .lower { margin-bottom: 15px; }
.rail .gear { margin-bottom: 15px; }
.grow { flex: 1; }

.taskbar {
  height: 60px; flex: none; border-top: 1px solid #bdb1b0; display: flex; align-items: center;
  background: linear-gradient(90deg, #f4e4d6 0, #f0e7d4 8%, #f4e1da 18%, #f3dfda 32%, #f0dbdb 42%, #eedcd4 54%, #eedcd2 70%, #f3dfdd 80%, #f3dfd8 88%, #d9eae5 96%, #d6e9e4 100%);
}
.start { margin: 0 18px 0 29px; }
.search {
  width: 273px; height: 41px; border-radius: 21px; background: #fcf6f2; border: 1px solid #dfd0cb; border-bottom-color: #bfb3b0;
  display: flex; align-items: center; padding: 0 5px 0 13px; font-size: 16px; letter-spacing: -.1px; color: #555;
}
.search span { flex: 1; padding-left: 11px; }
.apps { display: grid; grid-template-columns: repeat(13, 55px); margin-left: 3px; height: 48px; }
.item { position: relative; display: flex; align-items: center; justify-content: center; margin: 0 3px; border-radius: 5px; }
.notify { padding: 0 0 8px 8px; }
.profile { padding: 0 0 6px 6px; }
.chat { padding: 0 0 6px 10px; }
.item.open::after { content: ""; position: absolute; bottom: 0; left: 50%; width: 8px; height: 4px; margin-left: -4px; border-radius: 2px; background: #8b817d; }
.item.active { background: #f8eeee; }
.item.active::after { width: 20px; margin-left: -10px; background: #25808f; }
.badge { font: 14px "Open Sans", sans-serif; fill: #fff; text-anchor: middle; }
.w { font: bold 13px "Open Sans", sans-serif; fill: #fff; text-anchor: middle; }
.pre { font: bold 8px "Open Sans", sans-serif; fill: #222; text-anchor: middle; }
.tray { margin-left: auto; display: grid; grid-template-columns: 40px 40px 40px 56px 38px 22px 38px 89px 38px 52px; padding-right: 11px; height: 50px; }
.mic { background: #1f6875; border-radius: 5px; }
.lang, .clock { font-size: 14.4px; line-height: 20px; letter-spacing: -.2px; text-align: center; }
.clock { text-align: right; padding-top: 4px; white-space: nowrap; }
.clock span { letter-spacing: .3px; }
```
